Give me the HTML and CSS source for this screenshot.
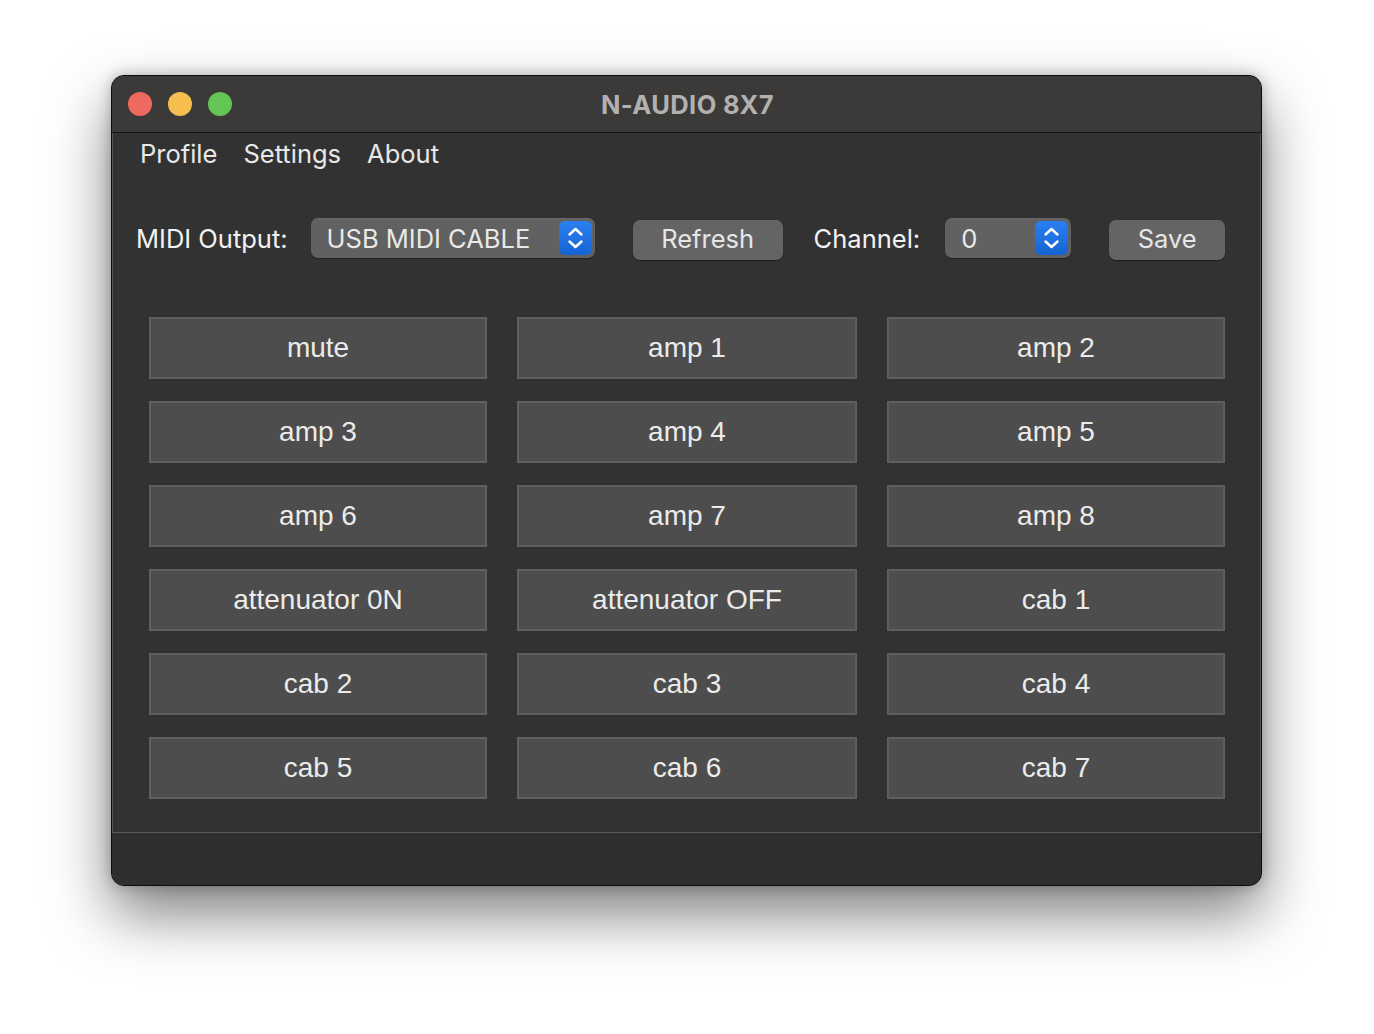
FILE: index.html
```html
<!DOCTYPE html>
<html>
<head>
<meta charset="utf-8">
<link rel="stylesheet" href="styles.css">
</head>
<body>
<div class="window">
  <div class="titlebar">
    <div class="lights">
      <span class="light red"></span>
      <span class="light yellow"></span>
      <span class="light green"></span>
    </div>
    <div class="title">N-AUDIO 8X7</div>
    <div class="spacer"></div>
  </div>
  <div class="menubar">
    <span class="menu-item">Profile</span>
    <span class="menu-item">Settings</span>
    <span class="menu-item">About</span>
  </div>
  <div class="controls">
    <span class="label">MIDI Output:</span>
    <div class="popup popup-midi">
      <span class="popup-text">USB MIDI CABLE</span>
      <span class="stepper"><svg width="33" height="34" viewBox="0 0 33 34"><path d="M10.5 13.5 L16.5 8 L22.5 13.5 M10.5 20.5 L16.5 26 L22.5 20.5" fill="none" stroke="#fff" stroke-width="2.4" stroke-linecap="round" stroke-linejoin="round"/></svg></span>
    </div>
    <div class="btn btn-refresh">Refresh</div>
    <span class="label label-channel">Channel:</span>
    <div class="popup popup-channel">
      <span class="popup-text">0</span>
      <span class="stepper"><svg width="33" height="34" viewBox="0 0 33 34"><path d="M10.5 13.5 L16.5 8 L22.5 13.5 M10.5 20.5 L16.5 26 L22.5 20.5" fill="none" stroke="#fff" stroke-width="2.4" stroke-linecap="round" stroke-linejoin="round"/></svg></span>
    </div>
    <div class="btn btn-save">Save</div>
  </div>
  <div class="grid">
    <div class="cell">mute</div>
    <div class="cell">amp 1</div>
    <div class="cell">amp 2</div>
    <div class="cell">amp 3</div>
    <div class="cell">amp 4</div>
    <div class="cell">amp 5</div>
    <div class="cell">amp 6</div>
    <div class="cell">amp 7</div>
    <div class="cell">amp 8</div>
    <div class="cell">attenuator 0N</div>
    <div class="cell">attenuator OFF</div>
    <div class="cell">cab 1</div>
    <div class="cell">cab 2</div>
    <div class="cell">cab 3</div>
    <div class="cell">cab 4</div>
    <div class="cell">cab 5</div>
    <div class="cell">cab 6</div>
    <div class="cell">cab 7</div>
  </div>
  <div class="statusbar"></div>
</div>
</body>
</html>
```
FILE: styles.css
```css
html, body {
  margin: 0;
  padding: 0;
  background: #ffffff;
  width: 1374px;
  height: 1034px;
  overflow: hidden;
}

body {
  padding-top: 75px;
  padding-left: 111px;
  box-sizing: border-box;
}

.window {
  width: 1151px;
  height: 811px;
  box-sizing: border-box;
  border: 1px solid #0c0c0c;
  border-radius: 13px;
  background: #323232;
  overflow: hidden;
  box-shadow: 0 28px 60px rgba(0, 0, 0, 0.5), 0 0 14px rgba(0, 0, 0, 0.25), inset 0 0 0 1px #555;
  display: flex;
  flex-direction: column;
  font-family: "Inter", "Liberation Sans", sans-serif;
  color: #e6e6e6;
}

.titlebar {
  height: 56px;
  flex: none;
  background: #3b3a39;
  border-bottom: 1px solid #161616;
  display: grid;
  grid-template-columns: 1fr auto 1fr;
  align-items: center;
}

.lights {
  display: flex;
  gap: 16px;
  padding-left: 16px;
}

.light {
  width: 24px;
  height: 24px;
  border-radius: 50%;
  display: block;
}
.red { background: #ee6a5f; }
.yellow { background: #f5be4f; }
.green { background: #62c554; }

.title {
  font-weight: 700;
  font-size: 25.5px;
  color: #b2b1b0;
  letter-spacing: 0.4px;
  padding-left: 2px;
}

.menubar {
  height: 40px;
  flex: none;
  display: flex;
  align-items: center;
  padding-left: 28px;
  gap: 26px;
  font-size: 25.5px;
  color: #e8e8e8;
}

.controls {
  flex: none;
  display: flex;
  align-items: center;
  margin-top: 43px;
  height: 44px;
  padding-left: 24px;
  font-size: 25.5px;
}

.label {
  color: #f2f2f2;
}

.popup {
  height: 40px;
  box-sizing: border-box;
  background: #616161;
  border-radius: 7px;
  box-shadow: 0 1px 1px rgba(0,0,0,0.4), inset 0 1px 0 rgba(255,255,255,0.05);
  display: flex;
  align-items: center;
  justify-content: space-between;
  padding: 0 3px 0 16px;
  color: #e9e9e9;
}

.popup-midi {
  width: 284px;
  margin-left: 23px;
}

.popup-channel {
  width: 126px;
  margin-left: 25px;
}

.stepper {
  width: 33px;
  height: 34px;
  border-radius: 6px;
  background: linear-gradient(#2a80f2, #1763d2);
  display: flex;
  align-items: center;
  justify-content: center;
}

.stepper svg {
  display: block;
}

.btn {
  height: 40px;
  margin-top: 3px;
  box-sizing: border-box;
  background: #646464;
  border-radius: 7px;
  box-shadow: 0 1px 1px rgba(0,0,0,0.4);
  display: flex;
  align-items: center;
  justify-content: center;
  color: #e6e6e6;
  padding-bottom: 2px;
}

.btn-refresh {
  width: 150px;
  margin-left: 38px;
}

.label-channel {
  margin-left: 31px;
}

.btn-save {
  width: 116px;
  margin-left: 38px;
}

.grid {
  flex: none;
  display: grid;
  grid-template-columns: 338px 340px 338px;
  grid-auto-rows: 62px;
  column-gap: 30px;
  row-gap: 22px;
  margin-top: 57px;
  padding-left: 37px;
}

.cell {
  box-sizing: border-box;
  background: #4d4d4d;
  border: 2px solid #5f5f5f;
  display: flex;
  align-items: center;
  justify-content: center;
  font-family: "Liberation Sans", Arial, sans-serif;
  font-size: 28px;
  color: #ebebeb;
}

.statusbar {
  margin-top: 33px;
  flex: 1;
  border-top: 1px solid #5a5a5a;
  background: #2e2e2e;
}
```
